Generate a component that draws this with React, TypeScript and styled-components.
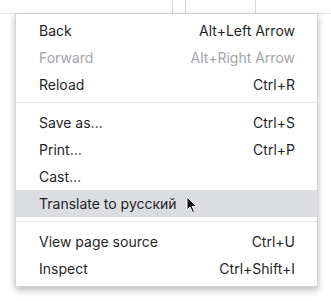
import React, { FC } from 'react';
import styled, { createGlobalStyle } from 'styled-components';

const GlobalStyle = createGlobalStyle`
	html, body {
		margin: 0;
		padding: 0;
		background: #ffffff;
	}
	body {
		font-family: Inter, "Noto Sans", sans-serif;
	}
`;

type Item = {
	label: string;
	shortcut?: string;
	disabled?: boolean;
	hover?: boolean;
};

const groups: Item[][] = [
	[
		{ label: 'Back', shortcut: 'Alt+Left Arrow' },
		{ label: 'Forward', shortcut: 'Alt+Right Arrow', disabled: true },
		{ label: 'Reload', shortcut: 'Ctrl+R' },
	],
	[
		{ label: 'Save as…', shortcut: 'Ctrl+S' },
		{ label: 'Print…', shortcut: 'Ctrl+P' },
		{ label: 'Cast…' },
		{ label: 'Translate to русский', hover: true },
	],
	[
		{ label: 'View page source', shortcut: 'Ctrl+U' },
		{ label: 'Inspect', shortcut: 'Ctrl+Shift+I' },
	],
];

const Cursor: FC = () => (
	<CursorSvg width="12" height="18" viewBox="0 0 12 18">
		<path d="M1 1 L1 14 L4 11 L6.5 16.5 L8.5 15.6 L6.1 10.3 L10.5 10.3 Z" fill="#111" stroke="#fff" strokeWidth="1" />
	</CursorSvg>
);

export const App: FC = () => (
	<Page>
		<GlobalStyle />
		<Backdrop>
			<span />
			<Line />
			<span />
			<Line />
			<span />
			<Line />
		</Backdrop>
		<Menu>
			{groups.map((group, gi) => (
				<React.Fragment key={gi}>
					{gi > 0 && <Separator />}
					{group.map((item) => (
						<Row key={item.label} hover={item.hover}>
							<Label disabled={item.disabled}>
								{item.label}
								{item.hover && <Cursor />}
							</Label>
							{item.shortcut && <Shortcut disabled={item.disabled}>{item.shortcut}</Shortcut>}
						</Row>
					))}
				</React.Fragment>
			))}
		</Menu>
	</Page>
);

const Page = styled.div`
	position: relative;
	width: 331px;
	height: 301px;
	overflow: hidden;
	background: #ffffff;
`;

const Backdrop = styled.div`
	display: grid;
	grid-template-columns: 172px 1px 12px 1px 69px 1px;
	height: 13px;
	border-bottom: 1px solid #e4e4e4;
`;

const Line = styled.div`
	background: #d6d8dc;
`;

const Menu = styled.div`
	position: absolute;
	left: 15px;
	top: 13px;
	width: 303px;
	box-sizing: border-box;
	padding: 3px 0 4px;
	background: #ffffff;
	border: 1px solid #d4d4d4;
	box-shadow: 0 3px 7px rgba(0, 0, 0, 0.28);
`;

const Row = styled.div<{ hover?: boolean }>`
	display: flex;
	align-items: center;
	justify-content: space-between;
	height: 27px;
	padding: 0 22px 0 23px;
	background: ${(props) => (props.hover ? '#dcdde1' : 'transparent')};
	font-size: 14px;
`;

const Label = styled.span<{ disabled?: boolean }>`
	position: relative;
	color: ${(props) => (props.disabled ? '#a2a4a8' : '#1f1f1f')};
	white-space: nowrap;
`;

const Shortcut = styled.span<{ disabled?: boolean }>`
	color: ${(props) => (props.disabled ? '#a2a4a8' : '#1f1f1f')};
	white-space: nowrap;
`;

const Separator = styled.div`
	height: 1px;
	margin: 4px 0 6px;
	background: #e6e6e6;
`;

const CursorSvg = styled.svg`
	position: absolute;
	left: calc(100% + 9px);
	top: 1px;
`;

export default App;
